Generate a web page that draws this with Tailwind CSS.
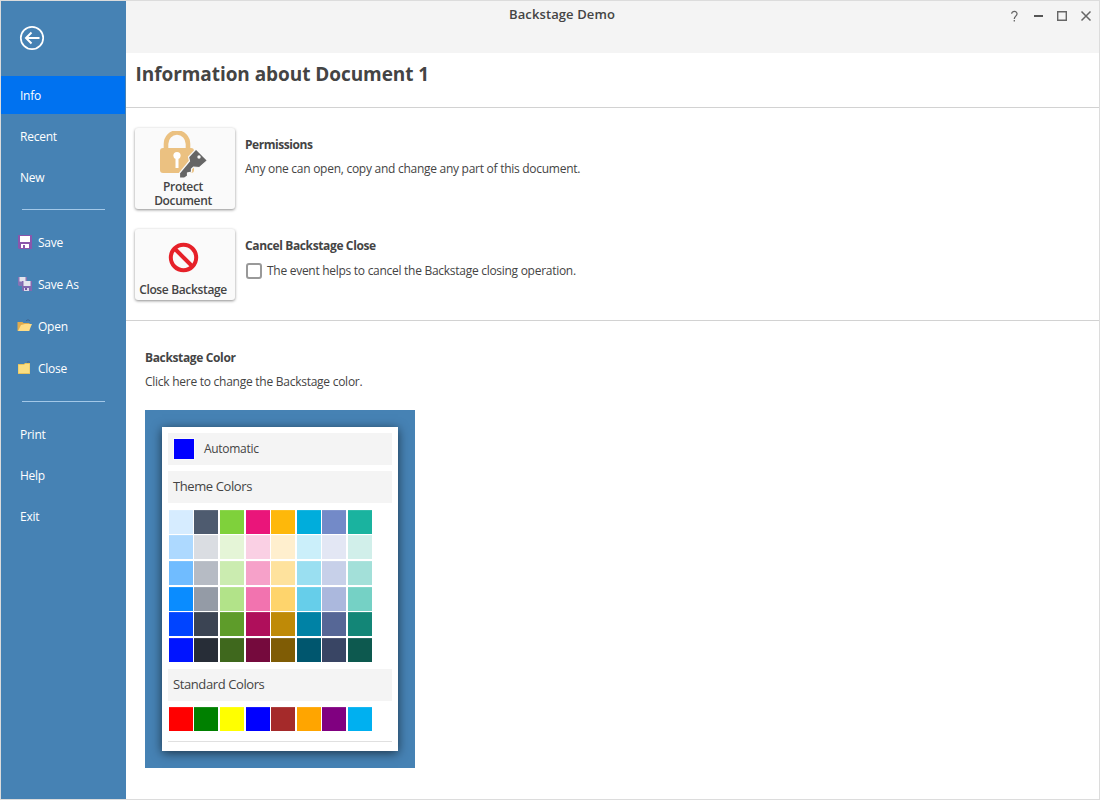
<!DOCTYPE html>
<html lang="en">
<head>
<meta charset="utf-8">
<title>Backstage Demo</title>
<script src="https://cdn.jsdelivr.net/npm/@tailwindcss/browser@4"></script>
</head>
<body class="h-[800px] w-[1100px] overflow-hidden bg-white font-['Open_Sans','Noto_Sans',sans-serif] text-[12px] text-[#444]">
<div class="flex h-[800px] w-[1100px] border border-[#dcdcdc]">
  <aside class="flex w-[125px] shrink-0 flex-col bg-[#4682b4] tracking-[-0.25px] text-white">
    <div class="h-[75px] pt-[24px] pl-[18px]">
      <svg width="26" height="26" viewBox="0 0 26 26" fill="none" stroke="#fff"><circle cx="13" cy="13" r="11.2" stroke-width="1.7"/><path d="M20.500 13H7M12.500 7.500L7 13l5.500 5.500" stroke-width="2"/></svg>
    </div>
    <nav class="flex flex-col">
      <a class="mr-px flex h-[38px] items-center bg-[#0072f0] pt-[2px] pl-[19px]"><span>Info</span></a>
      <a class="mt-[3px] flex h-[38px] items-center pt-[2px] pl-[19px]"><span>Recent</span></a>
      <a class="mt-[3px] flex h-[38px] items-center pt-[2px] pl-[19px]"><span>New</span></a>
      <hr class="mt-[13px] mr-[21px] ml-[21px] border-t border-[#a3c8e8]">
      <a class="mt-[14px] flex h-[38px] items-center pl-[16px]">
        <svg class="mr-[5px]" width="16" height="16" viewBox="0 1 16 16"><path d="M1 1h14v14H2l-1-1z" fill="#8a56ac"/><path d="M3 2h10v6H3zM4 10h8v4H4z" fill="#fff"/><path d="M6 11h2v3H6z" fill="#8a56ac"/></svg><span>Save</span></a>
      <a class="mt-[4px] flex h-[38px] items-center pl-[16px]">
        <svg class="mr-[5px]" width="16" height="16" viewBox="0 1 16 16"><path d="M1 1h9v9H2l-1-1z" fill="#8673b5"/><path d="M2.500 1h6v4.500h-6z" fill="#e4e4ec"/><path d="M5 5h10v10H6l-1-1z" fill="#8268b0"/><path d="M6.500 5h7v5h-7z" fill="#e6e6ee"/><path d="M7 12h5v3H7z" fill="#dcd8e8"/><path d="M8 12h2v2H8z" fill="#70569f"/></svg><span>Save As</span></a>
      <a class="mt-[4px] flex h-[38px] items-center pl-[16px]">
        <svg class="mr-[5px]" width="16" height="16" viewBox="0 1 16 16"><path d="M9 3c1-1.500 3-1.500 4 0" fill="none" stroke="#40638f"/><path d="M.5 13V4h5l1 1h6v8z" fill="#e0ab4e"/><path d="M1 13L4 7l4-1h7l-3 7z" fill="#ffdd86"/></svg><span>Open</span></a>
      <a class="mt-[4px] flex h-[38px] items-center pl-[16px]">
        <svg class="mr-[5px]" width="16" height="16" viewBox="0 1 16 16"><path d="M1 4h6l1-1h5v11H1z" fill="#e8c25c"/><path d="M1.500 5H7l1-1h4.500v9H1.500z" fill="#fade82"/><path d="M10 2.500c1-1 2-1 3 0" fill="none" stroke="#40638f"/></svg><span>Close</span></a>
      <hr class="mt-[13px] mr-[21px] ml-[21px] border-t border-[#a3c8e8]">
      <a class="mt-[14px] flex h-[38px] items-center pl-[19px]"><span>Print</span></a>
      <a class="mt-[3px] flex h-[38px] items-center pl-[19px]"><span>Help</span></a>
      <a class="mt-[3px] flex h-[38px] items-center pl-[19px]"><span>Exit</span></a>
    </nav>
  </aside>
  <main class="flex min-w-0 flex-1 flex-col">
    <header class="relative h-[52px] bg-[#f4f4f4]">
      <h1 class="pt-[4px] pr-[101px] text-center text-[13px] leading-[18px] font-semibold tracking-[0.1px]">Backstage Demo</h1>
      <svg class="absolute top-[8px] right-0" width="90" height="16" viewBox="0 0 90 16" fill="none" stroke="#666"><path d="M2.700 4.800C2.700 1.500 8.300 1.700 8 5c-.2 2.200-2.600 2.200-2.700 5M5.300 11v1.500" stroke-width="1.300"/><path d="M25 7h9" stroke="#555" stroke-width="2"/><path d="M48.700 2.700h8.600v8.600h-8.600z" stroke-width="1.400"/><path d="M72.500 2.500l9 9m0-9l-9 9" stroke-width="1.500"/></svg>
    </header>
    <h2 class="h-[55px] border-b border-[#d2d2d2] pt-[8px] pl-[9.500px] text-[19px] leading-[26px] font-bold tracking-[-0.06px]">Information about Document 1</h2>
    <section class="flex h-[213px] flex-col border-b border-[#d2d2d2] pt-[19px] pl-[8px]">
      <div class="flex h-[101px]">
        <button class="mt-px ml-px flex h-[81px] w-[100px] flex-col items-center rounded-[3px] bg-[#fafafa] pr-[4px] text-[12px] leading-[14px] font-semibold tracking-[-0.35px] shadow-[0_1px_3px_rgba(0,0,0,0.45)]">
          <svg class="mt-[3px] mb-[2px] ml-[2px] shrink-0" width="48" height="47" viewBox="0 0 48 47"><path d="M6 20V13a11 11.500 0 0 1 22 0V20" fill="none" stroke="#ebc181" stroke-width="4.600"/><rect y="17" width="34" height="25" rx="3" fill="#ebc181"/><circle cx="17" cy="24.500" r="3.600" fill="#fff"/><path d="M15.500 26h3v11h-3z" fill="#fff"/><path d="M36 18l11.500 11.500-8 7-6-.5-2 2v3l-4 1v3l-3 2h-5v-5l10-12-1-4z" fill="#666" stroke="#fafafa" stroke-width="1.200"/><circle cx="39" cy="26" r="1.700" fill="#fafafa"/></svg>
          <span>Protect<br>Document</span>
        </button>
        <div class="ml-[10px] pt-[9px] leading-[18px]"><h3 class="font-bold tracking-[-0.45px]">Permissions</h3><p class="mt-[6px] tracking-[-0.27px]">Any one can open, copy and change any part of this document.</p></div>
      </div>
      <div class="flex">
        <button class="mt-px ml-px flex h-[71px] w-[100px] flex-col items-center rounded-[3px] bg-[#fafafa] pr-[4px] text-[12px] leading-[14px] font-semibold tracking-[-0.35px] shadow-[0_1px_3px_rgba(0,0,0,0.45)]">
          <svg class="mt-[13px] mb-[10px] ml-px shrink-0" width="31" height="31" viewBox="0 0 31 31" fill="none" stroke="#e62129" stroke-width="4"><circle cx="15.500" cy="15.500" r="12.700"/><path d="M6.500 6.500l18 18"/></svg>
          <span>Close Backstage</span>
        </button>
        <div class="ml-[10px] pt-[9px] leading-[18px]"><h3 class="font-bold tracking-[-0.37px]">Cancel Backstage Close</h3>
          <div class="mt-[7px] flex items-center tracking-[-0.28px]"><i class="mr-[5px] ml-px size-[16px] rounded-[3px] border-2 border-[#999]"></i>The event helps to cancel the Backstage closing operation.</div></div>
      </div>
    </section>
    <section class="pt-[28px] pl-[19px] leading-[18px]">
      <h3 class="font-bold tracking-[-0.36px]">Backstage Color</h3>
      <p class="mt-[6px] tracking-[-0.26px]">Click here to change the Backstage color.</p>
      <div class="mt-[19px] h-[358px] w-[270px] bg-[#4682b4] px-[17px] pt-[17px]">
        <div class="h-[324px] w-[236px] bg-white px-[6px] pt-[6px] shadow-[0_2px_10px_rgba(0,0,0,0.6)]">
          <div class="flex h-[32px] items-center bg-[#f4f4f4] pl-[5px]"><i class="size-[22px] border border-[#fafafa] bg-[#00f]"></i><span class="ml-[9px] tracking-[-0.3px]">Automatic</span></div>
          <div class="mt-[6px] flex h-[32px] items-center bg-[#f4f4f4] pb-[2px] pl-[5px] text-[13px] tracking-[-0.4px]">Theme Colors</div>
          <div class="mt-[6.8px] ml-[0.8px] grid h-[159.2px] grid-cols-[repeat(8,24px)] grid-rows-[repeat(6,24px)] gap-[1.6px]" id="theme"></div>
          <div class="flex h-[32px] items-center bg-[#f4f4f4] pb-[2px] pl-[5px] text-[13px] tracking-[-0.4px]">Standard Colors</div>
          <div class="mt-[6px] ml-[0.8px] grid grid-cols-[repeat(8,24px)] gap-[1.6px]" id="standard"></div>
          <hr class="mt-[10px] border-t border-[#e0e0e0]">
        </div>
      </div>
    </section>
  </main>
</div>
<script>
const fill = (id, colors) => {
  document.getElementById(id).innerHTML = colors.split(' ').map(c => `<i class="h-[24px] border-t border-white/10" style="background-color:#${c}"></i>`).join('');
};
fill('theme', 'd6ecff 4e5b6f 7fd13b ea157a feb80a 00addc 738ac8 1ab39f add9ff dadde2 e5f5d7 fad0e4 ffefce cbeffa e3e7f4 d1efea 70bcff b6bbc4 cbecb0 f6a1c9 fee29d 9adff1 c7d0e9 a3e0d9 0a8cff 949ba6 b2e389 f273af fed46c 66ceea abb8dd 75d1c5 0044ff 3b4453 5e9c2a af0f5b bf8a07 0082a5 566796 138677 0014ff 272d37 3f681d 750a3d 7f5c05 00566e 394564 0d594f');
fill('standard', 'ff0000 008000 ffff00 0000ff a52a2a ffa500 800080 00b0f0');
</script>
</body>
</html>
